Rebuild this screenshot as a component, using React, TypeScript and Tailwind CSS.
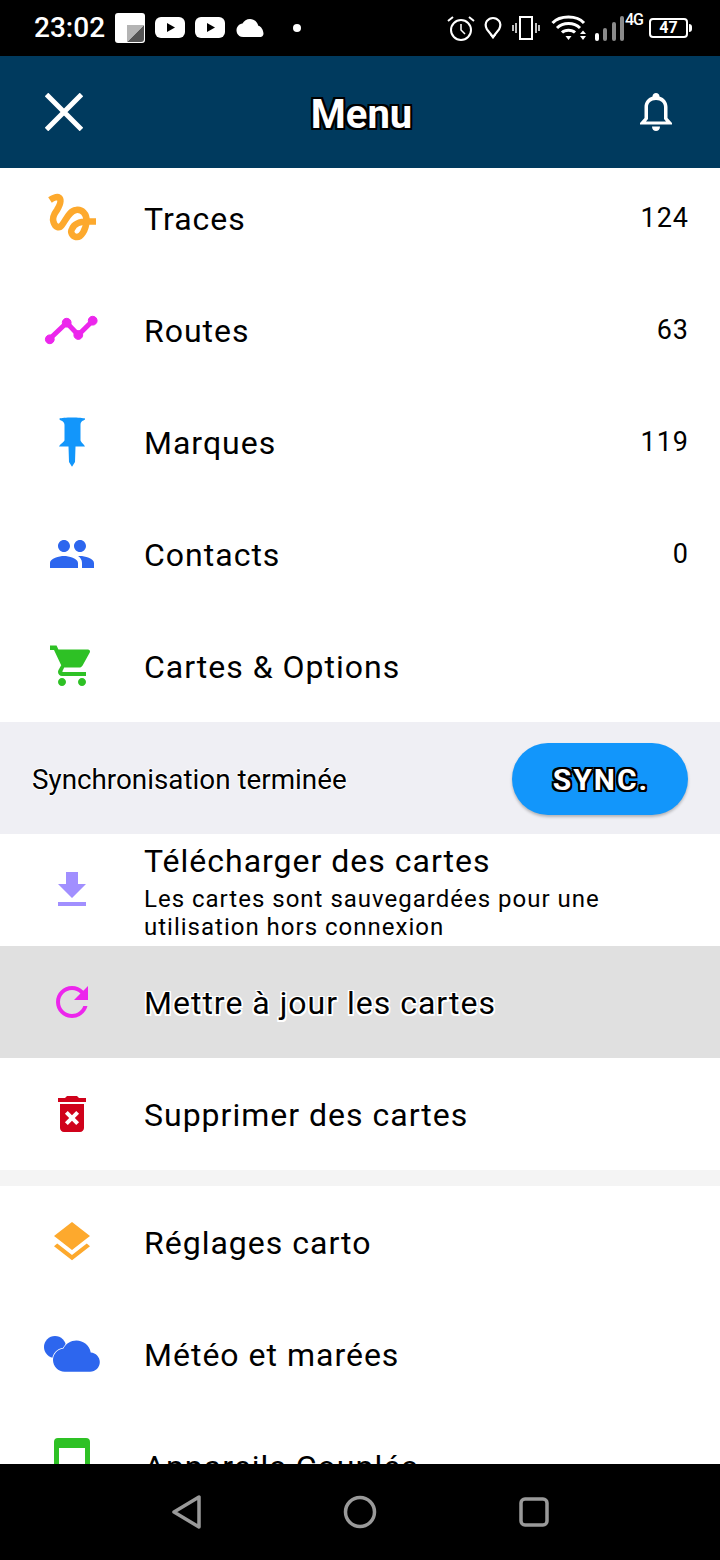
const font = { fontFamily: 'Roboto, sans-serif' }

function Traces() {
    return (
        <svg width="48" height="48" viewBox="0 0 48 48" className="overflow-visible">
            <path d="M2 6 C5 4 9 2 11 3.5 C14 6 12 11 9 16 C6 20 4 24 5.5 28 C7 33 11 35 14 31 C18 26 21 17 28 16 C34 15 39 20 38.5 27 C38 36 33 44 28 43 C24 42 22 38 24 35 C26 30 32 27.5 40 27.5 L48 27.5" fill="none" stroke="#fda92d" strokeWidth="6.5" />
        </svg>
    )
}

function Routes() {
    return (
        <svg width="48" height="48" viewBox="0 0 48 48" className="overflow-visible" fill="#ec26ec" stroke="#ec26ec">
            <path d="M1.3 33.3 L18.7 16.7 L30.3 29 L44.7 14.7" fill="none" strokeWidth="5" />
            <circle cx="1.8" cy="33.3" r="4.4" />
            <circle cx="18.7" cy="16.7" r="4.4" />
            <circle cx="30.3" cy="29" r="4.4" />
            <circle cx="44.7" cy="14.7" r="4.4" />
        </svg>
    )
}

function Pin() {
    return (
        <svg width="48" height="48" viewBox="0 0 48 48" className="overflow-visible">
            <path d="M11.5 0.5 C14 -1 34 -1 37 0.5 L37 1.5 C35 3 32.5 3 32.5 7 L32.5 22 C32.5 24 35 25 37 28.5 L27.5 28.5 L27 44 L24 48.7 L21 44 L20.5 28.5 L11 28.5 C13 25 16.5 24 16.5 22 L16.5 7 C16.5 3 13 3 11.5 1.5 Z" fill="#1296fb" />
        </svg>
    )
}

// material style icons, 24 unit box drawn at 48px
function Mat({ d, color }: { d: string; color: string }) {
    return (
        <svg width="48" height="48" viewBox="0 0 24 24" fill={color}>
            <path d={d} />
        </svg>
    )
}

function Weather() {
    return (
        <svg width="56" height="36" viewBox="0 0 56 36" className="shrink-0 overflow-visible">
            <circle cx="11" cy="11" r="11" fill="#2d66ee" />
            <path
                transform="translate(9 -3.2) scale(1.95)"
                d="M19.35 10.04C18.67 6.59 15.64 4 12 4 9.11 4 6.6 5.64 5.35 8.04 2.34 8.36 0 10.91 0 14c0 3.31 2.69 6 6 6h13c2.76 0 5-2.24 5-5 0-2.64-2.05-4.78-4.65-4.96z"
                fill="#2d66ee"
                stroke="#fff"
                strokeWidth="0.8"
                paintOrder="stroke"
            />
        </svg>
    )
}

function Device() {
    return (
        <svg width="48" height="48" viewBox="0 0 48 48" className="overflow-visible">
            <path d="M10 -4 H38 Q42 -4 42 0 V48 H6 V0 Q6 -4 10 -4 Z M11 6 V48 H37 V6 Z" fill="#2ec125" fillRule="evenodd" />
        </svg>
    )
}

function StatusBar() {
    return (
        <div className="h-14 bg-black flex items-center text-white shrink-0">
            <span className="ml-[34px] text-[28px] font-medium leading-none w-[71px]" style={font}>23:02</span>
            <svg width="30" height="30" viewBox="0 0 30 30" className="ml-[10px]">
                <rect width="30" height="30" rx="3" fill="#fff" />
                <path d="M12 29 L29 12 V26 Q29 29 26 29 Z" fill="#555" />
                <path d="M12 12 H29 L12 29 Z" fill="#b4b4b4" />
            </svg>
            <svg width="30" height="22" viewBox="0 0 30 22" className="ml-[10px]">
                <rect width="30" height="21" rx="6" fill="#fff" />
                <path d="M12 6 L20 10.5 L12 15 Z" fill="#000" />
            </svg>
            <svg width="30" height="22" viewBox="0 0 30 22" className="ml-[10px]">
                <rect width="30" height="21" rx="6" fill="#fff" />
                <path d="M12 6 L20 10.5 L12 15 Z" fill="#000" />
            </svg>
            <svg width="28" height="18" viewBox="0 0 24 16" className="ml-[11px]">
                <path d="M19.35 6.04C18.67 2.59 15.64 0 12 0 9.11 0 6.6 1.64 5.35 4.04 2.34 4.36 0 6.91 0 10c0 .0 0 6 6 6h14c2.76 0 4-1.24 4-3 0-2.64-2.05-6.78-4.65-6.96z" fill="#fff" />
            </svg>
            <div className="ml-[29px] w-2 h-2 rounded-full bg-white" />

            <svg width="28" height="26" viewBox="0 0 28 26" className="ml-[146px]" fill="none" stroke="#fff">
                <circle cx="14" cy="15" r="10" strokeWidth="2" />
                <path d="M14 9 V15 L18 19" strokeWidth="1.5" />
                <path d="M1 6 L6 2 M27 6 L22 2" strokeWidth="2" />
            </svg>
            <svg width="18" height="24" viewBox="0 0 18 24" className="ml-[9px]" fill="none" stroke="#fff">
                <path d="M9 21 L3 13.5 C-1 6 5 2 9 2 C13 2 19 6 15 13.5 Z" strokeWidth="2.2" />
                <path d="M6 19 H12 L9 23 Z" fill="#fff" stroke="none" />
            </svg>
            <svg width="28" height="24" viewBox="0 0 28 24" className="ml-[10px]" fill="none" stroke="#fff">
                <rect x="8" y="1" width="12" height="22" strokeWidth="2" />
                <path d="M4 7 V17 M1 9 V15 M24 7 V17 M27 9 V15" strokeWidth="1.5" />
            </svg>
            <svg width="36" height="26" viewBox="0 0 36 26" className="ml-[11px]" fill="none" stroke="#fff">
                <path d="M1.5 8 C9 0 26 0 33 8 M6 13 C12 7 23 7 29 13 M11 17.5 C14 14.5 21 14.5 24 17.5" strokeWidth="3" />
                <path d="M14.5 21 H20.5 L17.5 25 Z M29 19 H35 L32 15.5 Z M29 21 H35 L32 25 Z" fill="#fff" stroke="none" />
            </svg>
            <svg width="30" height="26" viewBox="0 0 30 26" className="ml-[8px]">
                <rect x="0" y="18" width="4" height="8" rx="2" fill="#fff" />
                <rect x="8" y="13" width="4" height="13" rx="2" fill="#8a8a8a" />
                <rect x="17" y="7" width="4" height="19" rx="2" fill="#8a8a8a" />
                <rect x="25" y="1" width="4" height="25" rx="2" fill="#8a8a8a" />
            </svg>
            <span className="text-[16px] tracking-[-1px] font-medium leading-none self-start mt-[12px] w-[18px]" style={font}>4G</span>
            <div className="ml-[6px] w-[39px] h-5 border-2 border-white rounded-[4px] flex items-center justify-center text-[16px] font-bold leading-none" style={font}>47</div>
            <div className="w-[3px] h-2 bg-white rounded-r-sm ml-px" />
        </div>
    )
}

function Header() {
    return (
        <div className="h-28 bg-[#003a5e] flex items-center justify-between px-[45px] shrink-0">
            <svg width="38" height="38" viewBox="0 0 38 38" fill="none" stroke="#fff" strokeWidth="5">
                <path d="M1.5 1.5 L36.5 36.5 M36.5 1.5 L1.5 36.5" />
            </svg>
            <span className="text-white font-bold text-[40px] leading-none mt-[5px] [text-shadow:-2px_0_#000,2px_0_#000,0_-2px_#000,0_2px_#000,-2px_-2px_#000,2px_-2px_#000,-2px_2px_#000,2px_2px_#000]" style={font}>Menu</span>
            <svg width="32" height="38" viewBox="0 0 32 38" fill="#fff" className="mr-[3px]">
                <path fillRule="evenodd" d="M16 0 C18 0 19.5 1.5 19.5 3.5 C24.5 5 27.5 9 27.5 14 V25 L32 30 V31.5 H0 V30 L4.5 25 V14 C4.5 9 7.5 5 12.5 3.5 C12.5 1.5 14 0 16 0 Z M16 7 C11 7 8 10 8 14 V26 L6 28.5 H26 L24 26 V14 C24 10 21 7 16 7 Z" />
                <path d="M12 33.5 H20 C20 36.5 18 38 16 38 C14 38 12 36.5 12 33.5 Z" />
            </svg>
        </div>
    )
}

type RowProps = {
    icon: React.ReactNode
    label: string
    count?: string
    sub?: string
    active?: boolean
}

function Row({ icon, label, count, sub, active }: RowProps) {
    return (
        <div className={active ? 'h-28 flex items-center pl-12 pr-8 bg-[#e0e0e0] shrink-0' : 'h-28 flex items-center pl-12 pr-8 bg-white shrink-0'}>
            <div className="w-12 h-12 flex items-center justify-center shrink-0">{icon}</div>
            <div className="ml-12 flex-1 min-w-0 text-black tracking-[1px]">
                <div className={active ? 'text-[32px] leading-9 mt-[2px] [text-shadow:-1.5px_0_#fff,1.5px_0_#fff,0_-1.5px_#fff,0_1.5px_#fff,-1.5px_-1.5px_#fff,1.5px_-1.5px_#fff,-1.5px_1.5px_#fff,1.5px_1.5px_#fff]' : sub ? 'text-[32px] leading-9 mt-[4px]' : 'text-[32px] leading-9 mt-[2px]'}>{label}</div>
                {sub && <div className="text-[24px] leading-7 mt-[6px]">{sub}</div>}
            </div>
            {count && <div className="text-[27px] leading-8 tracking-[1px] text-black -mr-px">{count}</div>}
        </div>
    )
}

export default function App() {
    return (
        <div className="w-[720px] h-[1560px] flex flex-col bg-white overflow-hidden" style={font}>
            <StatusBar />
            <Header />
            <div className="flex-1 min-h-0 overflow-hidden">
                <div className="-mt-[6px] flex flex-col">
                    <Row icon={<Traces />} label="Traces" count="124" />
                    <Row icon={<Routes />} label="Routes" count="63" />
                    <Row icon={<Pin />} label="Marques" count="119" />
                    <Row icon={<Mat color="#2d66ee" d="M16 11c1.66 0 2.99-1.34 2.99-3S17.66 5 16 5c-1.66 0-3 1.34-3 3s1.34 3 3 3zm-8 0c1.66 0 2.99-1.34 2.99-3S9.66 5 8 5C6.34 5 5 6.34 5 8s1.34 3 3 3zm0 2c-2.33 0-7 1.17-7 3.5V19h14v-2.5c0-2.33-4.67-3.5-7-3.5zm8 0c-.29 0-.62.02-.97.05 1.16.84 1.97 1.97 1.97 3.45V19h6v-2.5c0-2.33-4.67-3.5-7-3.5z" />} label="Contacts" count="0" />
                    <Row icon={<Mat color="#2ec125" d="M7 18c-1.1 0-1.99.9-1.99 2S5.9 22 7 22s2-.9 2-2-.9-2-2-2zM1 2v2h2l3.6 7.59-1.35 2.45c-.16.28-.25.61-.25.96 0 1.1.9 2 2 2h12v-2H7.42c-.14 0-.25-.11-.25-.25l.03-.12.9-1.83h7.45c.75 0 1.41-.41 1.75-1.03l3.58-6.49c.08-.14.12-.31.12-.48 0-.55-.45-1-1-1H5.21l-.94-2H1zm16 16c-1.1 0-1.99.9-1.99 2s.89 2 1.99 2 2-.9 2-2-.9-2-2-2z" />} label="Cartes & Options" />

                    {/* sync band */}
                    <div className="h-28 bg-[#efeff4] flex items-center justify-between pl-8 pr-8 shrink-0">
                        <span className="text-[27.8px] text-black mt-[4px] [text-shadow:-1px_0_#fff,1px_0_#fff,0_-1px_#fff,0_1px_#fff]">Synchronisation terminée</span>
                        <div className="w-44 h-[72px] mt-[2px] rounded-full bg-[#1296fb] shadow-[0_2px_3px_rgba(0,0,0,0.25)] flex items-center justify-center">
                            <span className="text-white font-bold text-[30px] tracking-[2px] ml-[2px] [text-shadow:-2px_0_#000,2px_0_#000,0_-2px_#000,0_2px_#000,-2px_-2px_#000,2px_-2px_#000,-2px_2px_#000,2px_2px_#000]">SYNC.</span>
                        </div>
                    </div>

                    <Row icon={<Mat color="#a18fff" d="M19 9h-4V3H9v6H5l7 7 7-7zM5 18v2h14v-2H5z" />} label="Télécharger des cartes" sub="Les cartes sont sauvegardées pour une utilisation hors connexion" />
                    <Row active icon={<Mat color="#ec26ec" d="M17.65 6.35C16.2 4.9 14.21 4 12 4c-4.42 0-7.99 3.58-7.99 8s3.57 8 7.99 8c3.73 0 6.84-2.55 7.73-6h-2.08c-.82 2.33-3.04 4-5.65 4-3.31 0-6-2.69-6-6s2.69-6 6-6c1.66 0 3.14.69 4.22 1.78L13 11h7V4l-2.35 2.35z" />} label="Mettre à jour les cartes" />
                    <Row icon={<Mat color="#d0021b" d="M6 19c0 1.1.9 2 2 2h8c1.1 0 2-.9 2-2V7H6v12zm2.46-7.12l1.41-1.41L12 12.59l2.12-2.12 1.41 1.41L13.41 14l2.12 2.12-1.41 1.41L12 15.41l-2.12 2.12-1.41-1.41L10.59 14l-2.13-2.12zM15.5 4l-1-1h-5l-1 1H5v2h14V4z" />} label="Supprimer des cartes" />

                    <div className="h-4 bg-[#f4f4f4] shrink-0" />

                    <Row icon={<Mat color="#fda92d" d="M11.99 18.54l-7.37-5.73L3 14.07l9 7 9-7-1.63-1.27-7.38 5.74zM12 16l7.36-5.73L21 9l-9-7-9 7 1.63 1.27L12 16z" />} label="Réglages carto" />
                    <Row icon={<Weather />} label="Météo et marées" />
                    <Row icon={<Device />} label="Appareils Couplés" />
                </div>
            </div>
            <div className="h-24 bg-black flex items-center justify-center gap-[117px] shrink-0">
                <svg width="56" height="56" viewBox="0 0 56 56" fill="none" stroke="#9a9a9a" strokeWidth="3.5" strokeLinejoin="round">
                    <path d="M40 13 V43 L15 28 Z" />
                </svg>
                <svg width="56" height="56" viewBox="0 0 56 56" fill="none" stroke="#9a9a9a" strokeWidth="3.5">
                    <circle cx="28" cy="28" r="14.5" />
                </svg>
                <svg width="56" height="56" viewBox="0 0 56 56" fill="none" stroke="#9a9a9a" strokeWidth="3.5">
                    <rect x="16" y="15" width="26" height="26" rx="4" />
                </svg>
            </div>
        </div>
    )
}
